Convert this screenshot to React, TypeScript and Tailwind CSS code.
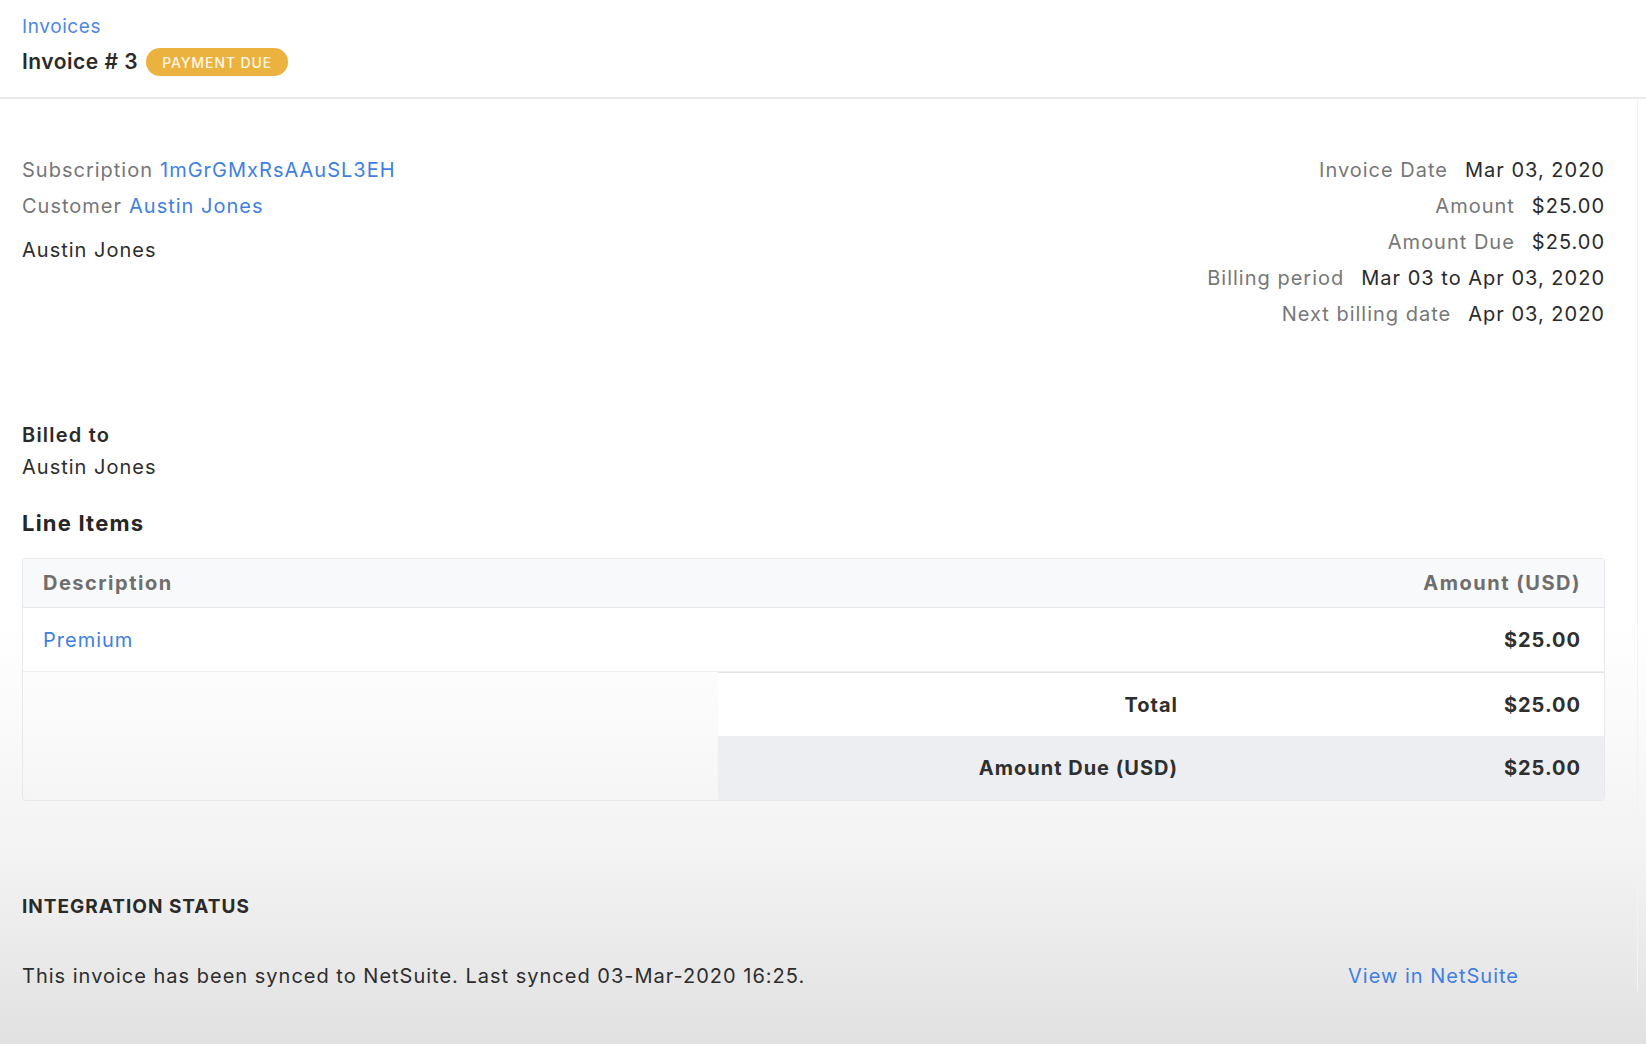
import React from "react";

const rightRows: [string, string][] = [
  ["Invoice Date", "Mar 03, 2020"],
  ["Amount", "$25.00"],
  ["Amount Due", "$25.00"],
  ["Billing period", "Mar 03 to Apr 03, 2020"],
  ["Next billing date", "Apr 03, 2020"],
];

export default function App() {
  return (
    <div className="min-h-screen w-full font-['Inter','Liberation_Sans',sans-serif] tracking-[1px] text-[#2d2d2d] bg-[linear-gradient(to_bottom,#ffffff_0%,#ffffff_60%,#f2f2f2_83%,#e1e1e1_100%)]">
      {/* Header */}
      <header className="h-[99px] border-b-2 border-[#ebebeb] bg-white px-[22px] pt-[14px]">
        <div className="h-[26px] text-[19px] leading-[26px] tracking-[0.6px] text-[#4f87df]">Invoices</div>
        <div className="mt-[6px] flex h-[32px] items-center gap-[8px]">
          <span className="text-[21px] font-semibold leading-[32px] tracking-[0.5px] text-[#2a2a2a]">Invoice # 3</span>
          <span className="flex h-[28px] items-center rounded-full bg-[#ebb23f] px-[16px] text-[14px] font-medium tracking-[0.9px] text-[#fff6e2]">
            PAYMENT DUE
          </span>
        </div>
      </header>

      <div className="flex">
        <main className="flex-1 px-[22px] pr-[32px] pt-[53px]">
          {/* Top info */}
          <section className="flex h-[180px] justify-between">
            <div>
              <div className="flex h-[36px] items-center gap-[7px] text-[20px]">
                <span className="text-[#767676]">Subscription</span>
                <span className="text-[#3f7fe0]">1mGrGMxRsAAuSL3EH</span>
              </div>
              <div className="flex h-[36px] items-center gap-[7px] text-[20px]">
                <span className="text-[#767676]">Customer</span>
                <span className="text-[#3f7fe0]">Austin Jones</span>
              </div>
              <div className="mt-[8px] flex h-[36px] items-center text-[20px] text-[#2d2d2d]">Austin Jones</div>
            </div>
            <div className="flex flex-col items-end">
              {rightRows.map(([l, v]) => (
                <div key={l} className="flex h-[36px] items-center gap-[17px] text-[20px]">
                  <span className="text-[#777777]">{l}</span>
                  <span className="text-[#2a2a2a]">{v}</span>
                </div>
              ))}
            </div>
          </section>

          {/* Billed to */}
          <section className="mt-[87px]">
            <div className="h-[32px] text-[20px] font-semibold leading-[32px] tracking-[1.2px] text-[#2a2a2a]">Billed to</div>
            <div className="h-[32px] text-[20px] leading-[32px] text-[#2d2d2d]">Austin Jones</div>
          </section>

          <h2 className="mt-[24px] h-[32px] text-[22px] font-bold leading-[32px] tracking-[1.2px] text-[#262626]">Line Items</h2>

          {/* Table */}
          <div className="mt-[19px] overflow-hidden rounded-[4px] border border-[#e6e8eb]">
            <div className="flex h-[49px] items-center justify-between border-b border-[#e6e8eb] bg-[#f8f9fa] px-[20px] text-[20px] font-bold tracking-[1.5px] text-[#6e6e6e]">
              <span>Description</span>
              <span className="pr-[3px]">Amount (USD)</span>
            </div>
            <div className="flex h-[64px] items-center justify-between border-b border-[#eceef0] bg-white px-[20px] text-[20px]">
              <span className="text-[#3f7fe0]">Premium</span>
              <span className="pr-[3px] font-bold text-[#2f2f2f]">$25.00</span>
            </div>
            <div className="flex">
              <div className="w-[695px]" />
              <div className="flex-1 bg-white">
                <div className="flex h-[64px] items-center border-t border-[#e3e5e9] text-[20px] font-bold text-[#2f2f2f]">
                  <span className="w-[460px] text-right">Total</span>
                  <span className="flex-1 pr-[23px] text-right">$25.00</span>
                </div>
                <div className="flex h-[64px] items-center bg-[#eceef2] text-[20px] font-bold text-[#2f2f2f]">
                  <span className="w-[460px] text-right">Amount Due (USD)</span>
                  <span className="flex-1 pr-[23px] text-right">$25.00</span>
                </div>
              </div>
            </div>
          </div>

          {/* Integration status */}
          <section className="mt-[92px]">
            <div className="h-[28px] text-[19px] font-bold leading-[28px] tracking-[1px] text-[#2a2a2a]">INTEGRATION STATUS</div>
            <div className="mt-[40px] flex h-[30px] items-center justify-between pr-[86px] text-[20px]">
              <span className="text-[#2d2d2d]">This invoice has been synced to NetSuite. Last synced 03-Mar-2020 16:25.</span>
              <span className="text-[#3f7fe0]">View in NetSuite</span>
            </div>
          </section>
        </main>
        <div className="w-[9px] border-l border-[#f3f3f3]" />
      </div>
    </div>
  );
}
